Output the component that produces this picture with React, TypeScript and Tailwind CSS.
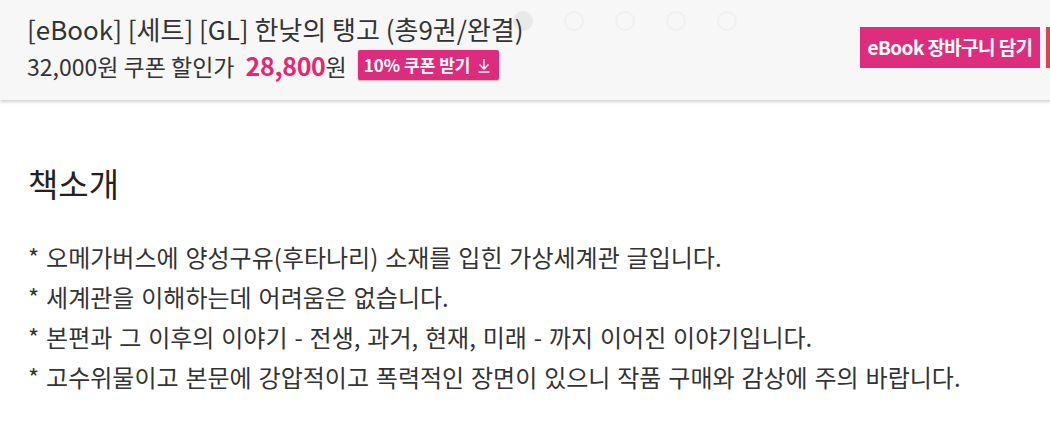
import React from 'react';

const font = { fontFamily: '"Noto Sans CJK KR", "Noto Sans", sans-serif' };

const intro = [
  '오메가버스에 양성구유(후타나리) 소재를 입힌 가상세계관 글입니다.',
  '세계관을 이해하는데 어려움은 없습니다.',
  '본편과 그 이후의 이야기 - 전생, 과거, 현재, 미래 - 까지 이어진 이야기입니다.',
  '고수위물이고 본문에 강압적이고 폭력적인 장면이 있으니 작품 구매와 감상에 주의 바랍니다.',
];

// 슬라이드 인디케이터
function Dots() {
  return (
    <div className="absolute left-[513px] top-[11px] flex gap-[31px]">
      <span className="w-5 h-5 rounded-full bg-[#e9e9e9]" />
      {[0, 1, 2, 3].map((i) => (
        <span key={i} className="w-5 h-5 rounded-full border-2 border-[#f0f0f0]" />
      ))}
    </div>
  );
}

export default function App() {
  return (
    <div className="w-[1050px] h-[448px] bg-white overflow-hidden text-[#333]" style={font}>
      {/* 상단 구매 바 */}
      <header className="relative w-[1226px] h-[100px] bg-[#f7f7f7] shadow-[0_2px_3px_rgba(0,0,0,0.18)] flex items-start justify-between pl-[27px]">
        <Dots />
        <div className="relative pt-[12px]">
          <h1 className="text-[26px] leading-[34px] text-[#333] whitespace-nowrap">[eBook] [세트] [GL] 한낮의 탱고 (총9권/완결)</h1>
          <div className="flex items-center mt-[3px] h-[32px]">
            <span className="text-[23px] leading-[32px] whitespace-nowrap">
              32,000원 쿠폰 할인가
              <b className="ml-[11px] text-[25px] font-bold tracking-[-0.3px] text-[#e8256f]">28,800</b>원
            </span>
            <button className="ml-[11px] h-[30px] pl-[6px] pr-[9px] flex items-center gap-[8px] bg-[#dd2c7d] text-white text-[17px] font-bold rounded-[2px] shadow-[0_1px_2px_rgba(0,0,0,0.3)] whitespace-nowrap">
              10% 쿠폰 받기
              <svg width="12" height="16" viewBox="0 0 12 16" fill="none" stroke="white" strokeWidth="1.4">
                <path d="M6 2v10M1.5 7.5 6 12l4.5-4.5M0.5 15h11" />
              </svg>
            </button>
          </div>
        </div>
        <div className="flex gap-[6px] pt-[27px]">
          <button className="w-[180px] h-[41px] bg-[#dd2e7d] text-white text-[19px] font-bold tracking-[-0.6px] whitespace-nowrap">
            eBook 장바구니 담기
          </button>
          <button className="w-[180px] h-[41px] bg-[#e0414f]" />
        </div>
      </header>

      {/* 책소개 */}
      <section className="pl-[28px] pt-[61px]">
        <h2 className="text-[33px] leading-[44px] text-[#222]">책소개</h2>
        <ul className="mt-[32px] text-[24px] leading-[40px] text-[#333] whitespace-nowrap [word-spacing:1.5px]">
          {intro.map((line) => (
            <li key={line}>* {line}</li>
          ))}
        </ul>
      </section>
    </div>
  );
}
